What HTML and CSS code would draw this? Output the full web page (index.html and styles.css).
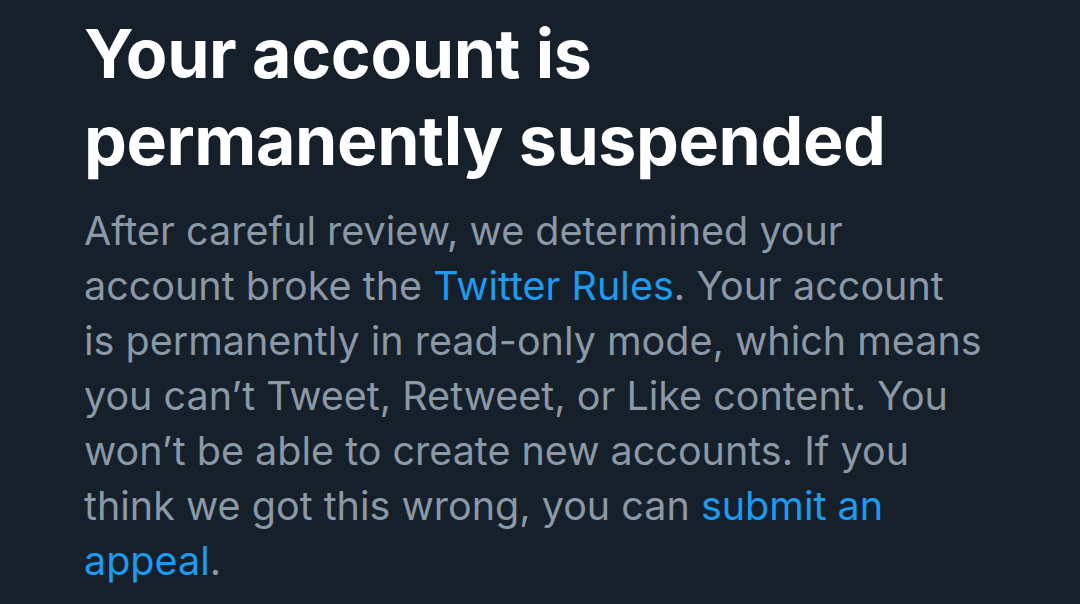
FILE: index.html
```html
<!DOCTYPE html>
<html lang="en">
<head>
<meta charset="utf-8">
<title>Your account is permanently suspended</title>
<link rel="stylesheet" href="styles.css">
</head>
<body>
<main class="notice">
  <h1 class="title">Your account is<br>permanently suspended</h1>
  <p class="text">After careful review, we determined your<br>account broke the <a class="link" href="#">Twitter Rules</a>. Your account<br>is permanently in read-only mode, which means<br>you can’t Tweet, Retweet, or Like content. You<br>won’t be able to create new accounts. If you<br>think we got this wrong, you can <a class="link" href="#">submit an</a><br><a class="link" href="#">appeal</a>.</p>
</main>
</body>
</html>
```
FILE: styles.css
```css
html, body {
  margin: 0;
  padding: 0;
  background: #16202b;
  height: 100%;
  overflow: hidden;
}
.notice {
  padding: 10px 84px 0 84px;
  font-family: Inter, "Noto Sans", sans-serif;
}
.title {
  margin: 0;
  color: #ffffff;
  font-weight: 700;
  font-size: 68px;
  line-height: 87px;
  letter-spacing: -0.4px;
}
.text {
  margin: 20px 0 0;
  color: #8b98a5;
  font-size: 39.5px;
  line-height: 55px;
  white-space: nowrap;
}
.link {
  color: #1d9bf0;
  text-decoration: none;
}
```
